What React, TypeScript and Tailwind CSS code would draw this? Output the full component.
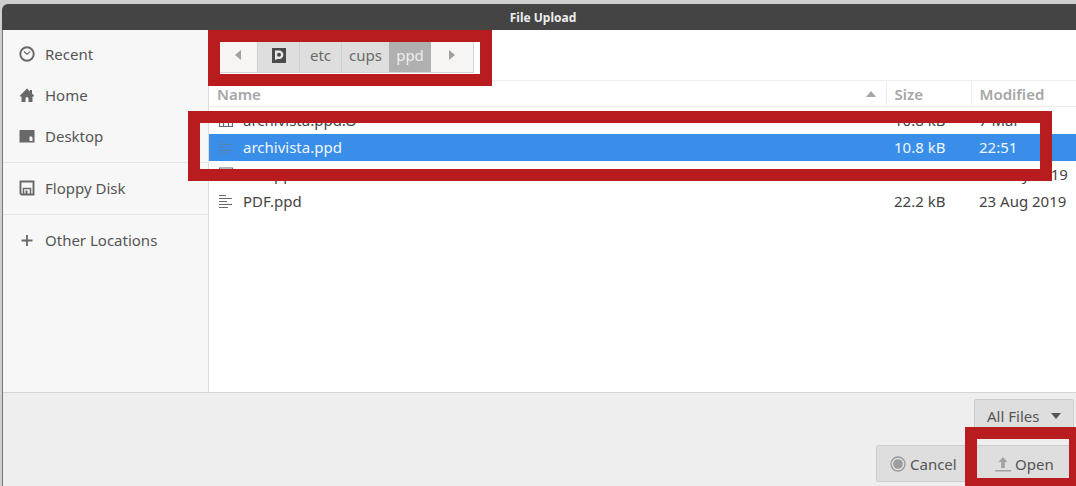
import { useState } from 'react';

type FileRow = {
  name: string;
  size: string;
  modified: string;
  kind: 'backup' | 'text';
};

const files: FileRow[] = [
  { name: 'archivista.ppd.O', size: '10.8 kB', modified: '7 Mar', kind: 'backup' },
  { name: 'archivista.ppd', size: '10.8 kB', modified: '22:51', kind: 'text' },
  { name: 'PDF.ppd.O', size: '20.6 kB', modified: '26 May 2019', kind: 'backup' },
  { name: 'PDF.ppd', size: '22.2 kB', modified: '23 Aug 2019', kind: 'text' },
];

const RecentIcon = () => (
  <svg width="16" height="16" viewBox="0 0 16 16" fill="none" stroke="currentColor">
    <circle cx="8" cy="8" r="6.7" strokeWidth="1.9" />
    <path d="M5 5.5 8 8.2l3.2-2.6" strokeWidth="1.1" />
  </svg>
);

const HomeIcon = () => (
  <svg width="16" height="16" viewBox="0 0 16 16" fill="currentColor">
    <path d="M8 1.5 1 8.5v1h1.500V15h4v-3.500a1.500 1.500 0 0 1 3 0V15h4V9.500H15v-1l-2-2V3h-2v1.500z" />
  </svg>
);

const DesktopIcon = () => (
  <svg width="16" height="16" viewBox="0 0 16 16" fill="currentColor">
    <path fillRule="evenodd" d="M1 2h14.500v12.500H.5V2.500zM10.500 8.500v4.500h3V9.500l-1-1z" />
  </svg>
);

const FloppyIcon = () => (
  <svg width="16" height="16" viewBox="0 0 16 16" fill="none" stroke="currentColor">
    <path d="M1.500 1.500h13v13h-12l-1-1z" strokeWidth="1.9" />
    <path d="M4.500 14V8.500h7V14" strokeWidth="1.500" />
    <path d="M7.500 10.500v3.500" strokeWidth="2" />
  </svg>
);

const PlusIcon = () => (
  <svg width="16" height="16" viewBox="0 0 16 16" fill="none" stroke="currentColor">
    <path d="M8 3v11M2.500 8.500h11" strokeWidth="1.800" />
  </svg>
);

const DriveIcon = () => (
  <svg width="14" height="15" viewBox="0 0 14 15">
    <path d="M0 0h14v15H0z" fill="#4a4a4a" />
    <path d="M3 2.500h4.200a4.200 4.200 0 0 1 0 8.400H5.500L3 12z" fill="#e6e6e6" />
    <circle cx="7" cy="6.700" r="2" fill="#4a4a4a" />
  </svg>
);

const FileIcon = ({ kind }: { kind: FileRow['kind'] }) =>
  kind === 'text' ? (
    <svg width="14" height="14" viewBox="0 0 14 14" stroke="currentColor" fill="none">
      <path d="M0 1.500h7M0 4.500h13M0 7.500h8M0 10.500h13M0 13.500h9" strokeWidth="1" />
    </svg>
  ) : (
    <svg width="14" height="14" viewBox="0 0 14 14" stroke="currentColor" fill="none">
      <path d="M.5 1h13v12.500H.5zM4.500 9v4M9.500 9v4" strokeWidth="1.200" />
    </svg>
  );

// Red marker drawn around the part the reader should look at
const Marker = ({ className }: { className: string }) => (
  <div className={`pointer-events-none absolute z-10 border-12 border-[#b91c1e] ${className}`} />
);

const places = [
  [
    { label: 'Recent', icon: <RecentIcon /> },
    { label: 'Home', icon: <HomeIcon /> },
    { label: 'Desktop', icon: <DesktopIcon /> },
  ],
  [{ label: 'Floppy Disk', icon: <FloppyIcon /> }],
  [{ label: 'Other Locations', icon: <PlusIcon /> }],
];

const App = () => {
  const [selected, setSelected] = useState('archivista.ppd');

  return (
    <div className="min-h-screen flex flex-col overflow-hidden bg-[#cfcfcf] pt-1 pl-[2px] font-['Noto_Sans',sans-serif] text-[15px] leading-5 text-[#555555]">
      <header className="h-[26px] flex items-center justify-center rounded-tl-md bg-[#444444] pt-[2px] pl-2">
        <h1 className="text-xs font-bold text-[#eeeeee]">File Upload</h1>
      </header>

      <div className="flex-1 flex flex-col border-l border-[#777777]">
        <main className="flex min-h-[362px]">
          <nav className="w-[206px] shrink-0 border-r border-[#dcdcdc] bg-[#f7f7f7]">
            {places.map((group, i) => (
              <ul key={i} className={i > 0 ? 'border-t border-[#e4e4e4] pt-1 pb-[6px]' : 'pt-[3px] pb-[6px]'}>
                {group.map((place) => (
                  <li key={place.label}>
                    <button className="flex h-[41px] w-full items-center gap-[10px] pl-4 text-left">
                      <span className="text-[#686868]">{place.icon}</span>
                      {place.label}
                    </button>
                  </li>
                ))}
              </ul>
            ))}
          </nav>

          <section className="min-w-0 flex-1 bg-white">
            <div className="flex h-[50px] items-center pl-2">
              <div className="relative flex h-9 items-stretch border border-[#d6d6d6] text-[#6a6a6a]">
                <button aria-label="Back" className="flex w-[39px] items-center justify-center bg-[#f7f4f4]">
                  <svg width="6" height="10" viewBox="0 0 6 10" fill="#a0a0a0">
                    <path d="M6 0v10L0 5z" />
                  </svg>
                </button>
                <button aria-label="Root" className="flex w-[42px] items-center justify-center border-l border-[#cfcfcf] bg-[#dedede]">
                  <DriveIcon />
                </button>
                <button className="w-[42px] border-l border-[#cfcfcf] bg-[#dedede]">etc</button>
                <button className="w-12 border-l border-[#cfcfcf] bg-[#dedede]">cups</button>
                <button className="w-[42px] bg-[#b0b0b0] text-[#eeeeee]">ppd</button>
                <button aria-label="Forward" className="flex w-[42px] items-center justify-center bg-[#f7f4f4]">
                  <svg width="6" height="10" viewBox="0 0 6 10" fill="#a0a0a0">
                    <path d="M0 0v10l6-5z" />
                  </svg>
                </button>
                <Marker className="-top-2 -right-[19px] -bottom-[14px] -left-[10px]" />
              </div>
            </div>

            <div className="relative">
              <table className="w-full table-fixed border-collapse">
                <thead>
                  <tr className="h-[26px] border-y border-[#ededed] text-left text-[#a6a6a6]">
                    <th className="pl-2 font-semibold">
                      <div className="flex items-center justify-between pr-[10px]">
                        Name
                        <svg width="10" height="6" viewBox="0 0 10 6" fill="#a6a6a6">
                          <path d="M5 0l5 6H0z" />
                        </svg>
                      </div>
                    </th>
                    <th className="w-[85px] border-l border-[#ededed] pl-2 font-semibold">Size</th>
                    <th className="w-[105px] border-l border-[#ededed] pl-2 font-semibold">Modified</th>
                  </tr>
                </thead>
                <tbody>
                  {files.map((file) => (
                    <tr
                      key={file.name}
                      onClick={() => setSelected(file.name)}
                      className={`h-[27px] whitespace-nowrap ${
                        selected === file.name ? 'bg-[#388ee9] text-[#f0f6fd]' : 'text-[#444444]'
                      }`}
                    >
                      <td className="pl-[10px]">
                        <div className="flex items-center gap-[10px]">
                          <span className={selected === file.name ? 'text-[#5b80ab]' : 'text-[#666b73]'}>
                            <FileIcon kind={file.kind} />
                          </span>
                          {file.name}
                        </div>
                      </td>
                      <td className="pl-2">{file.size}</td>
                      <td className="pl-2">{file.modified}</td>
                    </tr>
                  ))}
                </tbody>
              </table>
              <Marker className="top-[31px] right-6 h-[70px] -left-[21px]" />
            </div>
          </section>
        </main>

        <footer className="flex flex-1 flex-col items-end gap-3 border-t border-[#d4d4d4] bg-[#eeeeee] pt-[6px] pr-[2px]">
          <div className="relative">
            <select
              aria-label="File filter"
              className="h-[34px] w-[100px] appearance-none rounded-xs border border-[#cccccc] bg-[#dedede] pl-3"
            >
              <option>All Files</option>
            </select>
            <svg className="pointer-events-none absolute top-[14px] right-[13px]" width="10" height="6" viewBox="0 0 10 6" fill="#555555">
              <path d="M0 0h10L5 6z" />
            </svg>
          </div>
          <div className="flex gap-1">
            <button className="flex h-[37px] w-24 items-center gap-1 rounded-xs border border-[#cccccc] bg-[#dedede] pl-[13px]">
              <svg width="16" height="16" viewBox="0 0 16 16" fill="none" stroke="#9a9a9a">
                <circle cx="8" cy="8" r="7" strokeWidth="1.300" />
                <circle cx="8" cy="8" r="4.800" fill="#9c9c9c" stroke="none" />
              </svg>
              Cancel
            </button>
            <div className="relative">
              <button className="flex h-[37px] w-[98px] items-center gap-1 rounded-xs border border-[#cccccc] bg-[#dedede] pl-[18px]">
                <svg width="16" height="16" viewBox="0 0 16 16" fill="#a2a2a2">
                  <path d="M8 1l4.500 5H9.800v6H6.200V6H3.500zM0 14h16v1.400H0z" />
                </svg>
                Open
              </button>
              <Marker className="-top-[18px] -right-[7px] -bottom-2 -left-[11px]" />
            </div>
          </div>
        </footer>
      </div>
    </div>
  );
};

export default App;
